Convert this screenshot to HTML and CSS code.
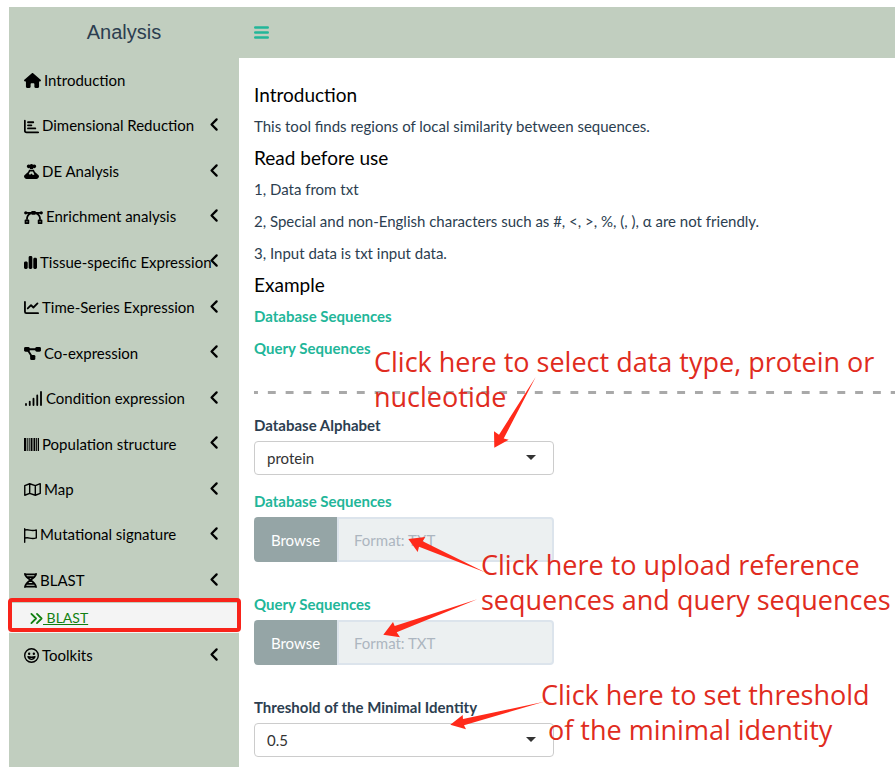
FILE: index.html
```html
<!DOCTYPE html>
<html lang="en">
<head>
<meta charset="utf-8">
<meta name="viewport" content="width=device-width, initial-scale=1">
<title>Analysis - BLAST</title>
<link rel="stylesheet" href="styles.css">
</head>
<body>
<svg class="defs" aria-hidden="true">
  <symbol id="chevron" viewBox="0 0 320 512"><path d="M250 80 76 256l174 176" fill="none" stroke="currentColor" stroke-width="76" stroke-linecap="round" stroke-linejoin="round"/></symbol>
</svg>
<div class="app">
  <header class="topbar">
    <div class="brand">Analysis</div>
    <button class="toggle" type="button" aria-label="Toggle navigation">
      <svg width="15" height="13" viewBox="0 0 15 13"><path d="M1.300 1.500h12.400M1.300 6.500h12.400M1.300 11.500h12.400" fill="none" stroke="currentColor" stroke-width="2.600" stroke-linecap="round"/></svg>
    </button>
  </header>
  <div class="body">
    <nav class="sidebar">
      <ul class="menu">
        <li><a class="item" href="#"><svg class="icon w17" viewBox="0 0 576 512"><path d="M575.8 255.500c0 18-15 32.100-32 32.100h-32l.7 160.200V472c0 22.100-17.900 40-40 40H392c-22.100 0-40-17.900-40-40v-88c0-17.700-14.300-32-32-32h-64c-17.700 0-32 14.300-32 32v88c0 22.100-17.900 40-40 40h-80c-22.100 0-40-17.900-40-40V287.600H32c-18 0-32-14-32-32.100 0-9 3-17 10-24L266.400 8c7-7 15-8 22-8s15 2 21 7l255.400 224.500c8 7 12 15 11 24z"/></svg><span>Introduction</span></a></li>
        <li><a class="item" href="#"><svg class="icon w15" viewBox="0 0 512 512"><path class="line heavy" d="M28 56v344c0 30 26 56 56 56h400M136 112h180M136 216h116M136 320h250"/></svg><span>Dimensional Reduction</span><svg class="chevron"><use href="#chevron"/></svg></a></li>
        <li><a class="item" href="#"><svg class="icon w15" viewBox="0 0 512 512"><path fill-rule="evenodd" d="M160 144c-35 0-64-29-64-64s29-64 64-64c15 0 29 5 40 14C212 12 233 0 256 0s44 12 56 30c11-9 25-14 40-14 35 0 64 29 64 64s-29 64-64 64c-15 0-29-5-40-14v38h-112v-38c-11 9-25 14-40 14zM176 200h160l34 62c6 12 14 22 24 31l102 92c10 9 16 23 16 37 0 49-41 90-90 90H90c-49 0-90-41-90-90 0-14 6-28 16-37l102-92c10-9 18-19 24-31zm31 56-45 84 28 18c12 8 28 6 38-4l28-26 40 38c10 10 26 12 38 4l20-14-49-100z"/></svg><span>DE Analysis</span><svg class="chevron"><use href="#chevron"/></svg></a></li>
        <li><a class="item" href="#"><svg class="icon w19" viewBox="0 0 640 512"><path class="line heavy" d="M64 96h512M208 124c-76 34-110 106-110 186M432 124c76 34 110 106 110 186"/><circle cx="56" cy="96" r="56"/><circle cx="584" cy="96" r="56"/><rect x="240" y="32" width="160" height="132" rx="32"/><path class="line heavy" d="M48 352h96v96H48zM496 352h96v96h-96z"/></svg><span>Enrichment analysis</span><svg class="chevron"><use href="#chevron"/></svg></a></li>
        <li><a class="item" href="#"><svg class="icon w13" viewBox="0 0 448 512"><path d="M160 80c0-26.500 21.500-48 48-48h32c26.500 0 48 21.500 48 48v352c0 26.500-21.500 48-48 48h-32c-26.500 0-48-21.500-48-48zM0 272c0-26.500 21.500-48 48-48h32c26.500 0 48 21.500 48 48v160c0 26.500-21.500 48-48 48H48c-26.500 0-48-21.500-48-48zM368 96h32c26.500 0 48 21.500 48 48v288c0 26.500-21.500 48-48 48h-32c-26.500 0-48-21.500-48-48V144c0-26.500 21.500-48 48-48z"/></svg><span>Tissue-specific Expression</span><svg class="chevron"><use href="#chevron"/></svg></a></li>
        <li><a class="item" href="#"><svg class="icon w15" viewBox="0 0 512 512"><path class="line heavy" d="M32 64v336c0 26 22 48 48 48h400M128 288l112-112 80 80 140-140"/></svg><span>Time-Series Expression</span><svg class="chevron"><use href="#chevron"/></svg></a></li>
        <li><a class="item" href="#"><svg class="icon w17" viewBox="0 0 576 512"><path class="line heavy" d="M96 112h384M120 128l150 240"/><rect y="32" width="192" height="160" rx="48"/><rect x="384" y="32" width="192" height="160" rx="48"/><rect x="208" y="304" width="176" height="176" rx="48"/></svg><span>Co-expression</span><svg class="chevron"><use href="#chevron"/></svg></a></li>
        <li><a class="item" href="#"><svg class="icon w19" viewBox="0 0 640 512"><path class="line heavy" d="M64 440v40M192 360v120M320 264v216M448 152v328M576 32v448"/></svg><span>Condition expression</span><svg class="chevron"><use href="#chevron"/></svg></a></li>
        <li><a class="item" href="#"><svg class="icon w15" viewBox="0 0 512 512"><path d="M0 32h68v448H0zM92 32h34v448H92zM160 32h34v448h-34zM226 32h64v448h-64zM324 32h62v448h-62zM412 32h30v448h-30zM468 32h44v448h-44z"/></svg><span>Population structure</span><svg class="chevron"><use href="#chevron"/></svg></a></li>
        <li><a class="item" href="#"><svg class="icon w17" viewBox="0 0 576 512"><path class="line" d="M24 122 192 60l192 64 168-66v330l-168 64-192-64-168 64zM192 60v328M384 124v328"/></svg><span>Map</span><svg class="chevron"><use href="#chevron"/></svg></a></li>
        <li><a class="item" href="#"><svg class="icon w13" viewBox="0 0 448 512"><path class="line" d="M24 24v464M24 72c136-60 204 60 400-8v276c-196 68-264-52-400 10"/></svg><span>Mutational signature</span><svg class="chevron"><use href="#chevron"/></svg></a></li>
        <li>
          <a class="item" href="#"><svg class="icon w13" viewBox="0 0 448 512"><path class="line heavy" d="M32 28c0 150 384 250 384 456M416 28c0 150-384 250-384 456M36 48h376M90 138h268M90 374h268M36 464h376"/></svg><span>BLAST</span><svg class="chevron"><use href="#chevron"/></svg></a>
          <a class="subitem" href="#"><svg class="icon w13" viewBox="0 0 448 512"><path class="line heavy" d="m48 96 160 160L48 416M240 96l160 160-160 160"/></svg><span class="sublabel">&nbsp;BLAST</span></a>
        </li>
        <li><a class="item" href="#"><svg class="icon w15" viewBox="0 0 512 512"><circle class="line" cx="256" cy="256" r="232"/><path class="line" d="M136 300c50 116 190 116 240 0-76 22-164 22-240 0z"/><circle cx="176" cy="196" r="40"/><circle cx="336" cy="196" r="40"/></svg><span>Toolkits</span><svg class="chevron"><use href="#chevron"/></svg></a></li>
      </ul>
    </nav>
    <main class="content">
      <h4>Introduction</h4>
      <p>This tool finds regions of local similarity between sequences.</p>
      <h4>Read before use</h4>
      <p>1, Data from txt</p>
      <p>2, Special and non-English characters such as #, &lt;, &gt;, %, (, ), α are not friendly.</p>
      <p>3, Input data is txt input data.</p>
      <h4>Example</h4>
      <p><a class="download" href="#">Database Sequences</a></p>
      <p><a class="download" href="#">Query Sequences</a></p>
      <hr class="divider">
      <form class="form">
        <div class="group">
          <label for="alphabet">Database Alphabet</label>
          <div class="select"><select id="alphabet"><option>protein</option><option>nucleotide</option></select></div>
        </div>
        <div class="group upload">
          <label class="accent" for="database">Database Sequences</label>
          <div class="file"><button type="button">Browse</button><input id="database" type="text" placeholder="Format: TXT" readonly></div>
        </div>
        <div class="group upload">
          <label class="accent" for="query">Query Sequences</label>
          <div class="file"><button type="button">Browse</button><input id="query" type="text" placeholder="Format: TXT" readonly></div>
        </div>
        <div class="group">
          <label for="identity">Threshold of the Minimal Identity</label>
          <div class="select"><select id="identity"><option>0.5</option></select></div>
        </div>
      </form>
    </main>
  </div>
  <div class="notes">
    <svg class="arrows" width="895" height="767" viewBox="0 0 895 767" aria-hidden="true">
      <path d="M494.300 447.700 494 431.300l5 3.400 36.700-57.700-32 61.500 5 1.200z"/>
      <path d="M408.300 539l17-2-2.600 4.300 62.300 31-66-25.600-1.300 5.300z"/>
      <path d="M383.300 634.700 393 622l1.700 4 82.600-26.700-80.600 33 3.300 5z"/>
      <path d="M450.300 724.700l12.400-9.700.3 4 81-17.300-80 23.600 2 4z"/>
    </svg>
    <span class="frame"></span>
    <p class="note note-type">Click here to select data type, protein or<br>nucleotide</p>
    <p class="note note-upload">Click here to upload reference<br>sequences and query sequences</p>
    <p class="note note-threshold">Click here to set threshold<br>&nbsp;of the minimal identity</p>
  </div>
</div>
</body>
</html>
```
FILE: styles.css
```css
* { box-sizing: border-box; }

body {
  margin: 0;
  padding: 7px 0 0 9px;
  background: #fff;
  color: #2c3e50;
  font: 15px/22px Lato, "Open Sans", sans-serif;
  overflow: hidden;
}

.defs { position: absolute; width: 0; height: 0; }

.app { min-height: calc(100vh - 7px); display: flex; flex-direction: column; }

.topbar { display: flex; align-items: center; height: 51px; background: #c1cebf; }

.brand {
  width: 230px;
  padding-bottom: 2px;
  text-align: center;
  font: 20px/48px "Liberation Sans", Arial, sans-serif;
}

.toggle {
  display: flex;
  margin: 0;
  padding: 0 15px;
  border: 0;
  background: none;
  color: #22b699;
}

.body { display: flex; flex: 1; }

.sidebar { flex: none; width: 230px; background: #c1cebf; }

.menu { margin: 0; padding: 0; list-style: none; line-height: 1.43; }

.item {
  display: flex;
  align-items: center;
  gap: 3px;
  padding: 12px 15px;
  color: #000;
  text-decoration: none;
  white-space: nowrap;
}

.item span { flex: 1; width: 0; }

.icon { flex: none; height: 15px; fill: currentColor; }
.w13 { width: 13px; }
.w15 { width: 15px; }
.w17 { width: 17px; }
.w19 { width: 19px; }

.line {
  fill: none;
  stroke: currentColor;
  stroke-width: 48;
  stroke-linecap: round;
  stroke-linejoin: round;
}
.heavy { stroke-width: 62; }

.chevron { flex: none; width: 10px; height: 15px; margin: 0 5px 3px 0; }

.subitem {
  display: flex;
  align-items: center;
  height: 30px;
  padding-left: 21px;
  background: #f4f4f4;
  color: #118011;
  font-size: 14px;
  text-decoration: none;
}
.sublabel { text-decoration: underline; }

.content { flex: 1; min-width: 0; padding: 26px 0 0 15px; }

h4 { margin: 0 0 9px; color: #000; font-size: 19px; font-weight: 400; line-height: 22px; }
p { margin: 0 0 10px; }

.download, .accent { color: #22b699; font-weight: 700; text-decoration: none; }

.divider {
  height: 3px;
  margin: 32px 0 21px;
  border: 0;
  background: linear-gradient(to right, #a9a9a9 4px, transparent 4px 14px, #a9a9a9 14px) 0 0 / 18px 3px round;
}

.group { width: 300px; margin-bottom: 16px; }
.upload { margin-bottom: 32px; }

label { display: block; margin-bottom: 5px; font-weight: 700; line-height: 21px; }
label.accent { color: #22b699; }

.select { position: relative; }
.select::after {
  content: "";
  position: absolute;
  top: 14px;
  right: 18px;
  border: 5px solid transparent;
  border-top-color: #333;
  border-bottom: 0;
  pointer-events: none;
}

select {
  appearance: none;
  display: block;
  width: 100%;
  height: 34px;
  padding: 0 12px;
  border: 1px solid #ccc;
  border-radius: 4px;
  background: #fff;
  color: #333;
  font: inherit;
}

.file { display: flex; height: 45px; }
.file button {
  flex: none;
  width: 83px;
  padding: 0;
  border: 0;
  border-radius: 4px 0 0 4px;
  background: #95a5a6;
  color: #fff;
  font: inherit;
}
.file input {
  flex: 1;
  min-width: 0;
  padding: 0 15px;
  border: 2px solid #dce4ec;
  border-radius: 0 4px 4px 0;
  background: #ecf0f1;
  font: inherit;
}
.file input::placeholder { color: #acb6c0; opacity: 1; }

/* Tutorial annotations drawn over the page */
.notes { position: absolute; top: 0; left: 0; pointer-events: none; }
.arrows { position: absolute; top: 0; left: 0; fill: #ff2a1a; }
.frame {
  position: absolute;
  top: 598px;
  left: 8px;
  width: 233px;
  height: 34px;
  border: 4px solid #f8231a;
  border-radius: 4px;
}
.note {
  position: absolute;
  margin: 0;
  color: #e02b20;
  font: 27px/35px "Open Sans", "Noto Sans", sans-serif;
  white-space: nowrap;
}
.note-type { top: 344px; left: 374px; }
.note-upload { top: 547px; left: 481px; }
.note-threshold { top: 677px; left: 541px; }
```
